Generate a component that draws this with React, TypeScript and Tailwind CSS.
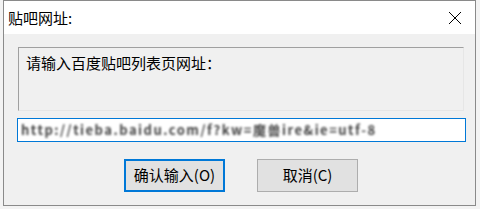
import React from "react";

export default function App() {
  const font = { fontFamily: '"Noto Sans CJK SC", "Noto Sans", sans-serif' };
  return (
    <div className="w-[480px] h-[209px] bg-[#f3f3f3] overflow-hidden" style={font}>
      <div className="ml-[3px] w-[473px] h-[206px] border border-[#8a8a8a] bg-[#f0f0f0] flex flex-col">
        <div className="h-[33px] bg-white flex items-center justify-between pl-[4px] pr-[13px] text-[15px] text-black">
          <span className="leading-none">贴吧网址:</span>
          <svg width="14" height="14" viewBox="0 0 14 14">
            <path d="M1 1 L13 13 M13 1 L1 13" stroke="#000" strokeWidth="1" />
          </svg>
        </div>
        <div className="flex flex-col pl-[13px]">
          <div className="mt-[13px] ml-[1px] w-[446px] h-[64px] border border-t-[#a0a0a0] border-l-[#a0a0a0] border-r-[#e6e6e6] border-b-[#e6e6e6] pl-[7px] pt-[4px] text-[15px] leading-[22px] text-black">
            请输入百度贴吧列表页网址：
          </div>
          <div className="mt-[7px] w-[449px] h-[24px] border border-[#0078d7] bg-white flex items-center pl-[3px] overflow-hidden">
            <span className="text-[13px] font-bold text-[#444] blur-[1.3px] whitespace-nowrap tracking-[1.5px]">
              http://tieba.baidu.com/f?kw=魔兽ire&amp;ie=utf-8
            </span>
          </div>
          <div className="mt-[17px] flex gap-[32px] pl-[107px]">
            <button className="w-[101px] h-[33px] border-2 border-[#0078d7] bg-[#e1e1e1] text-[15px] text-black flex items-center justify-center">
              确认输入(O)
            </button>
            <button className="w-[101px] h-[33px] border border-[#adadad] bg-[#e1e1e1] text-[15px] text-black flex items-center justify-center">
              取消(C)
            </button>
          </div>
        </div>
      </div>
    </div>
  );
}
